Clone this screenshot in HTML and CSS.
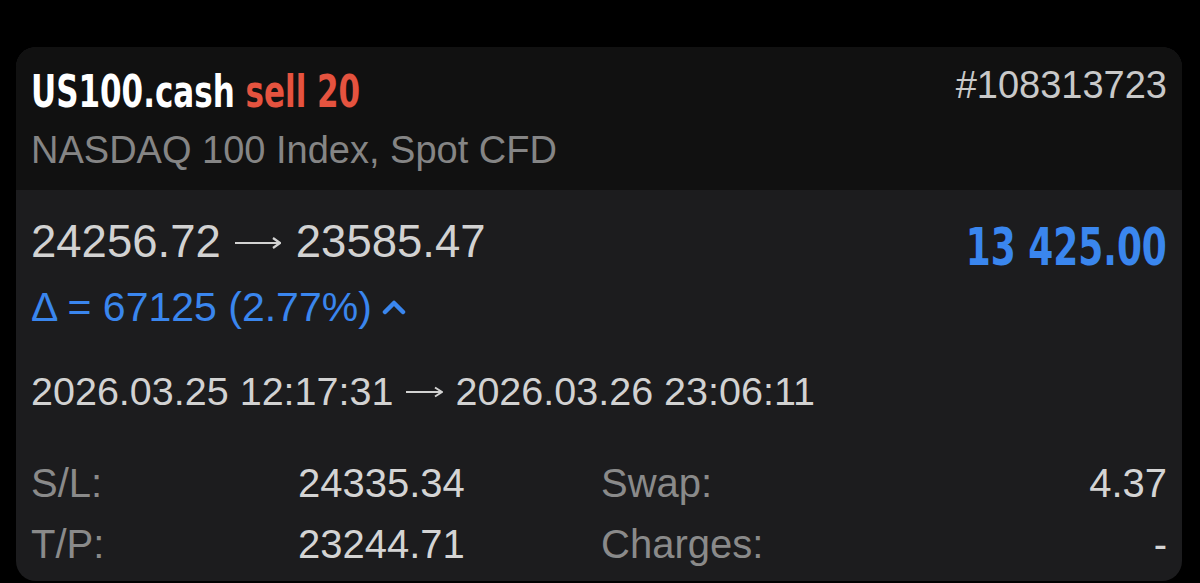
FILE: index.html
```html
<!DOCTYPE html>
<html lang="en">
<head>
  <meta charset="UTF-8" />
  <meta name="viewport" content="width=device-width, initial-scale=1.0" />
  <title>US100.cash position</title>
  <link rel="stylesheet" href="styles.css">
</head>
<body>
  <div class="card">
    <div class="card-header">
      <div class="symbol">
        <div class="title"><span class="narrow">US100.cash <span class="side">sell 20</span></span></div>
        <div class="desc">NASDAQ 100 Index, Spot CFD</div>
      </div>
      <div class="ticket">#108313723</div>
    </div>

    <div class="card-body">
      <div class="price-row">
        <div class="price-info">
          <div class="prices">24256.72<svg class="arrow arrow-lg" width="47" height="14" viewBox="0 0 47 14">
              <path d="M1 7H46M39 2L46 7L39 12" fill="none" stroke="currentColor" stroke-width="2.2" stroke-linejoin="miter" />
            </svg>23585.47</div>
          <div class="delta">Δ = 67125 (2.77%)<svg class="caret" width="26" height="16" viewBox="0 0 26 16">
              <polyline points="4,13 13,4 22,13" fill="none" stroke="currentColor" stroke-width="4.5" stroke-linecap="round" stroke-linejoin="round" />
            </svg></div>
        </div>
        <div class="profit"><span class="narrow">13 425.00</span></div>
      </div>

      <div class="dates">2026.03.25 12:17:31<svg class="arrow arrow-sm" width="38" height="12" viewBox="0 0 38 12">
          <path d="M1 6H37M30 1.5L37 6L30 10.5" fill="none" stroke="currentColor" stroke-width="2" stroke-linejoin="miter" />
        </svg>2026.03.26 23:06:11</div>

      <div class="details">
        <span class="label">S/L:</span><span class="value">24335.34</span>
        <span class="label">Swap:</span><span class="value end">4.37</span>
        <span class="label">T/P:</span><span class="value">23244.71</span>
        <span class="label">Charges:</span><span class="value end">-</span>
      </div>
    </div>
  </div>
</body>
</html>
```

FILE: styles.css
```css
body {
  margin: 0;
  padding: 47px 18px 0 16px;
  background-color: #000;
  font-family: "Liberation Sans", Arial, sans-serif;
}
.card {
  height: 534px;
  border-radius: 20px;
  overflow: hidden;
  background-color: #1c1c1e;
}
.card-header {
  display: flex;
  justify-content: space-between;
  padding: 14px 15px 16px;
  background-color: #111111;
}
.narrow {
  display: inline-block;
  font-family: "DejaVu Sans Condensed", "DejaVu Sans", sans-serif;
  font-weight: bold;
  white-space: nowrap;
  transform: scaleX(0.783);
}
.title {
  margin-top: 7px;
  font-size: 44px;
  line-height: 48px;
  color: #ffffff;
}
.title .narrow {
  transform-origin: left center;
}
.side {
  color: #e5533f;
}
.desc {
  margin-top: 10px;
  font-size: 38px;
  line-height: 48px;
  color: #858585;
}
.ticket {
  font-size: 38px;
  line-height: 48px;
  color: #c9c9c9;
}
.card-body {
  padding: 25px 15px 0;
}
.price-row {
  display: flex;
  justify-content: space-between;
  align-items: flex-start;
}
.prices {
  font-size: 45.5px;
  line-height: 54px;
  color: #d2d2d2;
}
.arrow {
  vertical-align: 7px;
}
.arrow-lg {
  margin: 0 15px 0 13px;
}
.arrow-sm {
  margin: 0 12px 0 12px;
}
.delta {
  margin-top: 13px;
  font-size: 41px;
  line-height: 50px;
  color: #3a86ee;
}
.caret {
  margin-left: 9px;
  vertical-align: 6px;
}
.profit {
  margin-top: 6px;
  font-size: 51px;
  line-height: 54px;
  color: #3a86ee;
}
.profit .narrow {
  transform-origin: right center;
}
.dates {
  margin-top: 34px;
  font-size: 39.5px;
  line-height: 50px;
  color: #d2d2d2;
}
.details {
  display: grid;
  grid-template-columns: 267px 303px 1fr auto;
  margin-top: 37px;
  font-size: 40px;
  line-height: 61px;
}
.label {
  color: #8a8a8a;
}
.value {
  color: #d4d4d4;
}
.end {
  justify-self: end;
}
```
